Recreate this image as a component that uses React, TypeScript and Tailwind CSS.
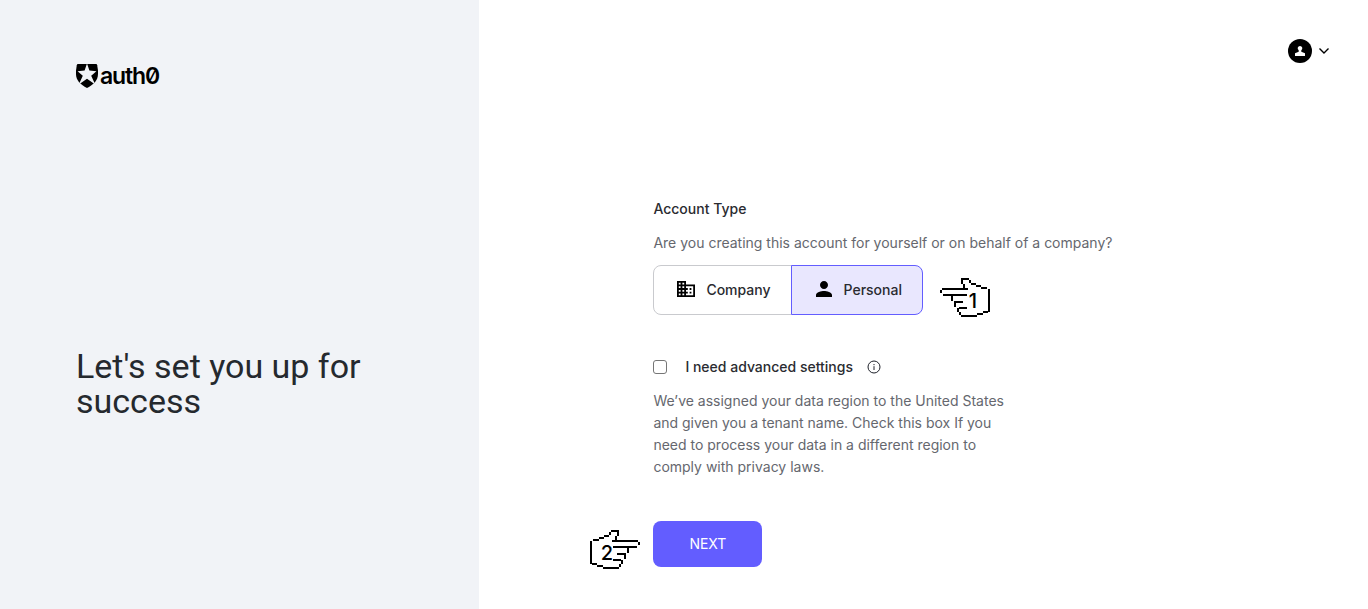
import { useState } from "react";
import type { ReactNode } from "react";

const HAND_PATH =
  "M1 13h2v3h-2z M3 11h26v2h-26z M4 17h24v2h-24z M22 1h8v2h-8z M22 3h2v4h-2z M24 7h2v4h-2z M30 3h2v3h-2z M32 6h5v2h-5z M37 8h5v2h-5z M42 10h6v2h-6z M49 12h2v23h-2z M44 34h5v2h-5z M38 36h6v2h-6z M22 38h16v2h-16z M20 35h2v3h-2z M18 31h2v4h-2z M20 30h8v2h-8z M15 25h2v5h-2z M15 24h9v2h-9z M12 19h2v5h-2z";

function PointingHand({ step, flipped = false }: { step: number; flipped?: boolean }) {
  return (
    <svg width="52" height="42" viewBox="0 0 52 42" role="img" aria-label={`Step ${step}`}>
      <g transform={flipped ? "translate(52 0) scale(-1 1)" : undefined} shapeRendering="crispEdges">
        <path d={HAND_PATH} fill="#000" />
      </g>
      <text x={flipped ? 18 : 34} y="31" textAnchor="middle" fontSize="20" fontWeight="500" fontFamily="Inter, sans-serif">
        {step}
      </text>
    </svg>
  );
}

function Logo() {
  return (
    <a href="#" aria-label="auth0" className="flex items-center gap-0.5 text-black">
      <svg width="22" height="25" viewBox="0 0 22 25" fill="currentColor" aria-hidden="true">
        <path d="M2.2 1H19.8C20.6 1 21 1.5 21.2 2.2L22 7.5V11C22 17.5 17.5 21.5 11 25C4.5 21.5 0 17.5 0 11V7.5L.8 2.2C1 1.5 1.4 1 2.2 1Z" />
        <path fill="#f1f3f7" d="M11 .6L13.4 7.6L20.4 8.2L15.2 12.7L19.2 21.4L11 15.8L2.8 21.4L6.8 12.7L1.6 8.2L8.6 7.6Z" />
      </svg>
      <span className="text-[23px] leading-6 font-semibold tracking-tighter slashed-zero">auth0</span>
    </a>
  );
}

function TypeOption({
  label,
  selected,
  onSelect,
  shape,
  children,
}: {
  label: string;
  selected: boolean;
  onSelect: () => void;
  shape: string;
  children: ReactNode;
}) {
  return (
    <label
      className={`flex h-[50px] cursor-pointer items-center gap-2 border px-5 pb-0.5 text-[14px] font-medium ${shape} ${
        selected ? "z-10 border-[#635dff] bg-[#e9e7fe]" : "border-[#c9cace] bg-white"
      }`}
    >
      <input type="radio" name="account-type" checked={selected} onChange={onSelect} className="sr-only" />
      <svg width="24" height="24" viewBox="0 0 24 24" fill="#000" aria-hidden="true">
        {children}
      </svg>
      {label}
    </label>
  );
}

export default function App() {
  const [type, setType] = useState("personal");

  return (
    <div className="flex min-h-screen bg-white font-['Inter',sans-serif] text-[#2a2b30]">
      <aside className="flex w-[35%] flex-col bg-[#f1f3f7] px-[76px] pt-[63px]">
        <Logo />
        <div className="flex flex-1 items-center pt-[71px]">
          <h1 className="font-['Roboto',sans-serif] text-[34px] leading-[35px] text-[#25292e]">Let's set you up for success</h1>
        </div>
      </aside>
      <main className="flex flex-1 flex-col">
        <header className="flex justify-end px-[38px] pt-[39px]">
          <button type="button" aria-label="Account menu" className="flex items-center gap-1.5">
            <svg width="24" height="24" viewBox="0 0 24 24" aria-hidden="true">
              <circle cx="12" cy="12" r="12" />
              <path fill="#fff" d="M12 7a2.3 2.3 0 0 1 1.3 4.2v1.5l3.7 1.5V17H7v-2.8l3.7-1.5v-1.5A2.3 2.3 0 0 1 12 7Z" />
            </svg>
            <svg width="12" height="24" viewBox="0 0 12 24" fill="none" stroke="#000" strokeWidth="1.4" aria-hidden="true">
              <path d="M1.5 9.5L6 14L10.5 9.5" />
            </svg>
          </button>
        </header>
        <form className="mx-auto flex w-full max-w-[540px] flex-1 flex-col justify-center pt-[93px]" onSubmit={(e) => e.preventDefault()}>
          <fieldset>
            <legend className="text-[14px] leading-[22px] font-medium">Account Type</legend>
            <p className="mt-3 text-[14px] leading-[22px] text-[#65676e]">
              Are you creating this account for yourself or on behalf of a company?
            </p>
            <div className="mt-[11px] flex items-center">
              <TypeOption label="Company" selected={type === "company"} onSelect={() => setType("company")} shape="rounded-l-lg">
                <path
                  transform="translate(1.2 1.2) scale(.9)"
                  d="M12 7V3H2v18h20V7H12zM6 19H4v-2h2v2zm0-4H4v-2h2v2zm0-4H4V9h2v2zm0-4H4V5h2v2zm4 12H8v-2h2v2zm0-4H8v-2h2v2zm0-4H8V9h2v2zm0-4H8V5h2v2zm10 12h-8v-2h2v-2h-2v-2h2v-2h-2V9h8v10zm-2-8h-2v2h2v-2zm0 4h-2v2h2v-2z"
                />
              </TypeOption>
              <TypeOption label="Personal" selected={type === "personal"} onSelect={() => setType("personal")} shape="-ml-px rounded-r-lg">
                <path d="M12 12c2.21 0 4-1.79 4-4s-1.79-4-4-4-4 1.79-4 4 1.79 4 4 4zm0 2c-2.67 0-8 1.34-8 4v2h16v-2c0-2.66-5.33-4-8-4z" />
              </TypeOption>
              <div className="relative">
                <div className="absolute -top-[13px] left-4">
                  <PointingHand step={1} />
                </div>
              </div>
            </div>
          </fieldset>
          <div className="mt-[41px] flex items-center">
            <input id="advanced" type="checkbox" className="size-3.5 appearance-none rounded-[3px] border border-[#767676] bg-white checked:bg-[#635dff]" />
            <label htmlFor="advanced" className="ml-[18px] text-[14px] leading-[22px] font-medium">
              I need advanced settings
            </label>
            <svg className="ml-3.5" width="14" height="14" viewBox="0 0 14 14" fill="none" stroke="#1e212a" aria-hidden="true">
              <circle cx="7" cy="7" r="6" />
              <path d="M7 6.2V10M7 4V5.2" />
            </svg>
          </div>
          <p className="mt-3 max-w-[362px] text-[14px] leading-[22px] text-[#65676e]">
            We’ve assigned your data region to the United States and given you a tenant name. Check this box If you need to process your data in a different region to comply with privacy laws.
          </p>
          <div className="relative mt-[43px] flex">
            <div className="absolute top-2 -left-16">
              <PointingHand step={2} flipped />
            </div>
            <button type="submit" className="h-[46px] rounded-lg bg-[#635dff] px-9 pb-0.5 text-[14px] text-white">
              NEXT
            </button>
          </div>
        </form>
      </main>
    </div>
  );
}
